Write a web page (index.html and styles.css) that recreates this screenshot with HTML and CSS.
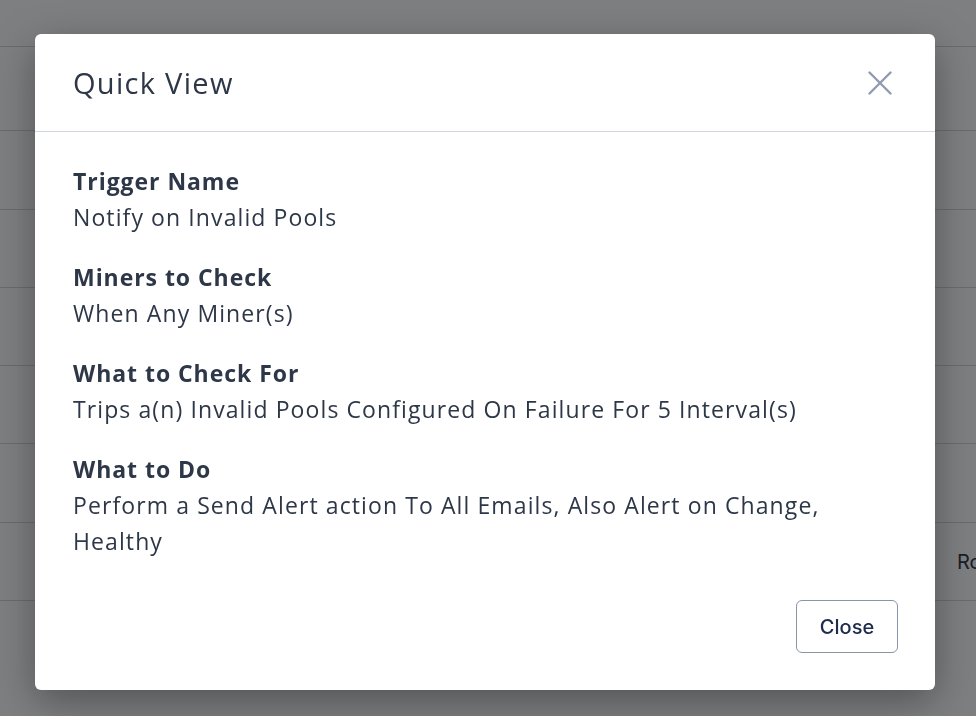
FILE: index.html
```html
<!DOCTYPE html>
<html lang="en">
<head>
<meta charset="utf-8">
<title>Quick View</title>
<link rel="stylesheet" href="styles.css">
</head>
<body>
<div class="page">
  <div class="table">
    <div class="row row-head"></div>
    <div class="row row-first"></div>
    <div class="row row-tall"></div>
    <div class="row"></div>
    <div class="row"></div>
    <div class="row"></div>
    <div class="row row-tall"></div>
    <div class="row"><span class="cell-text">Role</span></div>
  </div>
</div>

<div class="overlay">
  <div class="modal">
    <div class="modal-header">
      <h2 class="modal-title">Quick View</h2>
      <button class="icon-close" aria-label="Close">
        <svg width="24" height="24" viewBox="0 0 24 24" fill="none" stroke="currentColor" stroke-width="2.4" stroke-linecap="round">
          <path d="M1.5 1.5 L22.5 22.5 M22.5 1.5 L1.5 22.5"/>
        </svg>
      </button>
    </div>
    <div class="modal-body">
      <div class="field">
        <div class="label">Trigger Name</div>
        <div class="value">Notify on Invalid Pools</div>
      </div>
      <div class="field">
        <div class="label">Miners to Check</div>
        <div class="value">When Any Miner(s)</div>
      </div>
      <div class="field">
        <div class="label">What to Check For</div>
        <div class="value">Trips a(n) Invalid Pools Configured On Failure For 5 Interval(s)</div>
      </div>
      <div class="field">
        <div class="label">What to Do</div>
        <div class="value">Perform a Send Alert action To All Emails, Also Alert on Change, Healthy</div>
      </div>
    </div>
    <div class="modal-footer">
      <button class="btn">Close</button>
    </div>
  </div>
</div>
</body>
</html>
```

FILE: styles.css
```css
* { box-sizing: border-box; }

html, body {
  margin: 0;
  padding: 0;
  width: 976px;
  height: 716px;
  overflow: hidden;
  font-family: "Open Sans", "Lato", sans-serif;
  background: #ffffff;
  color: #2d3748;
}

.page {
  width: 976px;
  height: 716px;
}

.table {
  display: flex;
  flex-direction: column;
}

.row {
  height: 78px;
  border-bottom: 1px solid #d2d4d8;
  display: flex;
  align-items: center;
  justify-content: flex-end;
}

.row-head { height: 47px; }
.row-first { height: 84px; }
.row-tall { height: 79px; }

.cell-text {
  font-family: "Inter", sans-serif;
  font-size: 20px;
  color: #1f2937;
  margin-right: -27px;
  width: 46px;
  overflow: hidden;
  white-space: nowrap;
}

.overlay {
  position: fixed;
  inset: 0;
  background: rgba(20, 22, 26, 0.55);
  padding-top: 34px;
  padding-left: 35px;
}

.modal {
  width: 900px;
  background: #ffffff;
  border-radius: 6px;
  box-shadow: 0 12px 40px rgba(0, 0, 0, 0.35);
  display: flex;
  flex-direction: column;
}

.modal-header {
  height: 98px;
  padding: 0 38px 0 38px;
  border-bottom: 1px solid #cfd6df;
  display: flex;
  align-items: center;
  justify-content: space-between;
}

.modal-title {
  margin: 0;
  font-size: 29px;
  font-weight: 400;
  letter-spacing: 1.3px;
  color: #2d3748;
}

.icon-close {
  background: none;
  border: 0;
  padding: 0;
  margin-right: 5px;
  width: 24px;
  height: 24px;
  color: #8e9bb0;
  display: flex;
  cursor: pointer;
}

.modal-body {
  padding: 31px 38px 0 38px;
  display: flex;
  flex-direction: column;
  gap: 24px;
}

.field {
  display: flex;
  flex-direction: column;
}

.label {
  font-size: 23px;
  line-height: 36px;
  font-weight: 700;
  letter-spacing: 0.95px;
  color: #2d3748;
}

.value {
  font-size: 23px;
  line-height: 36px;
  font-weight: 400;
  letter-spacing: 1.1px;
  color: #2d3748;
  max-width: 770px;
}

.modal-footer {
  display: flex;
  justify-content: flex-end;
  padding: 41px 37px 37px 38px;
}

.btn {
  width: 102px;
  height: 53px;
  background: #ffffff;
  border: 1px solid #8a94a8;
  border-radius: 6px;
  font-family: "Inter", "Lato", sans-serif;
  font-size: 20px;
  font-weight: 500;
  color: #1e2b4d;
  cursor: pointer;
}
```
